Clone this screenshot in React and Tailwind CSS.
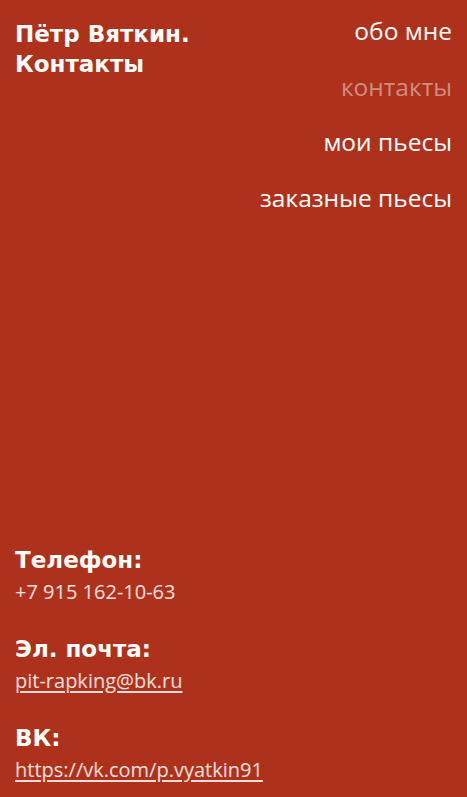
import React from "react";

const NAV = [
  { label: "обо мне", active: false },
  { label: "контакты", active: true },
  { label: "мои пьесы", active: false },
  { label: "заказные пьесы", active: false },
];

const CONTACTS = [
  { title: "Телефон:", value: "+7 915 162-10-63" },
  { title: "Эл. почта:", value: "pit-rapking@bk.ru", href: "mailto:pit-rapking@bk.ru" },
  { title: "ВК:", value: "https://vk.com/p.vyatkin91", href: "https://vk.com/p.vyatkin91" },
];

export default function App() {
  return (
    <div className="min-h-screen bg-[#ae311b] text-white flex flex-col justify-between px-[15px] pb-[13.5px] font-['Open_Sans',sans-serif]">
      <header className="flex justify-between items-start">
        <h1 className="mt-[19px] font-['DejaVu_Sans',sans-serif] font-bold text-[23px] leading-[30px]">
          Пётр Вяткин.
          <br />
          Контакты
        </h1>
        <nav className="flex flex-col items-end pt-[16px]">
          {NAV.map((item) => (
            <a
              key={item.label}
              href="#"
              className={`text-[24.5px] leading-[30px] mb-[25.5px] ${item.active ? "text-white/45" : "text-white"}`}
            >
              {item.label}
            </a>
          ))}
        </nav>
      </header>

      <section className="flex flex-col gap-[31px]">
        {CONTACTS.map((c) => (
          <div key={c.title} className="flex flex-col">
            <h2 className="font-['DejaVu_Sans',sans-serif] font-bold text-[23px] leading-[25px] mb-[5px]">{c.title}</h2>
            {c.href ? (
              <a href={c.href} className="text-[20px] leading-[28px] text-white/85 underline underline-offset-[3px]">
                {c.value}
              </a>
            ) : (
              <span className="text-[20px] leading-[28px] text-white/85">{c.value}</span>
            )}
          </div>
        ))}
      </section>
    </div>
  );
}
